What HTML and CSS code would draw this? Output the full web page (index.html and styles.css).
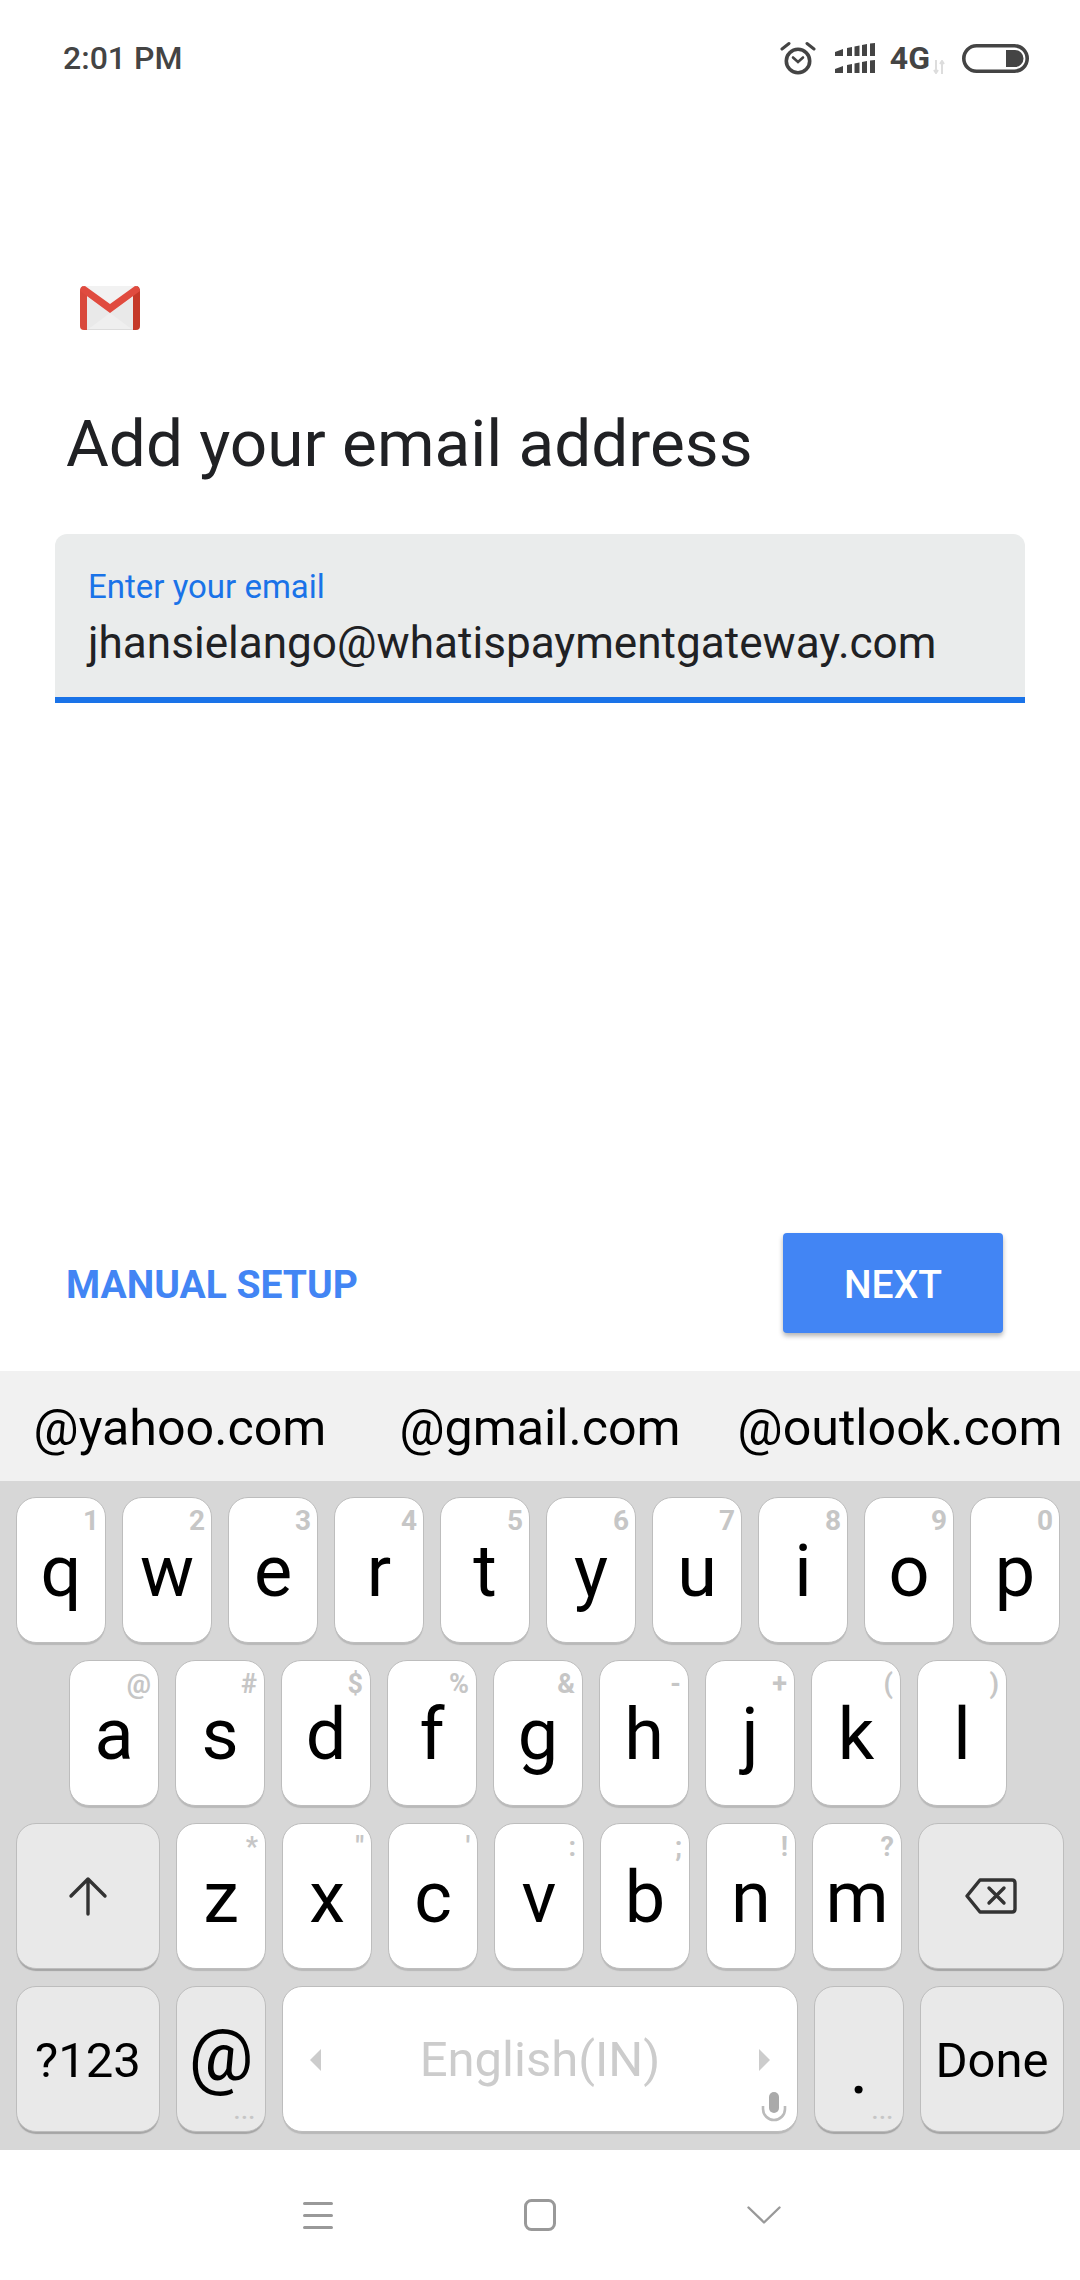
FILE: index.html
```html
<!DOCTYPE html>
<html lang="en">
<head>
<meta charset="utf-8">
<title>Add your email address</title>
<link rel="stylesheet" href="styles.css">
</head>
<body>
<div class="phone">
  <header class="status">
    <span class="time">2:01 PM</span>
    <div class="status-icons">
      <svg class="ic-alarm" width="36" height="34" viewBox="0 0 36 34" fill="none" stroke="#444" stroke-linecap="round"><circle cx="18" cy="20" r="11.7" stroke-width="3.6"/><path d="M13 16.5 18 21l5-4.5" stroke-width="2.6"/><path d="M2 8 9 2.5M27 2.5 34 8" stroke-width="3"/></svg>
      <svg class="ic-signal" width="40" height="30" viewBox="0 0 40 30" fill="#444"><path d="M0 9l8-3v7H0zM12 5l5-1v9h-5zM19.500 3.500l5-1V13h-5zM27 2l5-1v12h-5zM35 .5 40 0v13h-5z"/><path d="M0 26l8-3v7H0zM12 22l5-1v9h-5zM19.500 20.500l5-1V30h-5zM27 19l5-1v12h-5zM35 17.500 40 17v13h-5z"/></svg>
      <span class="net">4G</span>
      <svg class="ic-arrows" width="12" height="14" viewBox="0 0 12 14" fill="none" stroke="#ddd" stroke-width="2"><path d="M3 0v13M1 10l2 3 2-3M9 14V1M7 4l2-3 2 3"/></svg>
      <svg class="ic-battery" width="67" height="29" viewBox="0 0 67 29"><rect x="1.800" y="1.800" width="63.400" height="25.400" rx="12.700" fill="none" stroke="#444" stroke-width="3.600"/><path d="M44 6h9a8.500 8.500 0 0 1 0 17h-9z" fill="#444"/></svg>
    </div>
  </header>

  <main class="main">
    <svg class="gmail" width="60" height="44" viewBox="0 0 60 44">
      <rect width="60" height="44" rx="4" fill="#f2f2f2"/>
      <path d="M7 11l23 16 23-16v33H7z" fill="#e9e9e9"/>
      <path d="M7 44l23-17 23 17z" fill="#efefef"/>
      <path d="M7 43h46v1H7z" fill="#dcdcdc"/>
      <path d="M0 5q0-4 3-5l4 4v40H4q-4 0-4-4z" fill="#d9493c"/>
      <path d="M60 5q0-4-3-5l-4 4v40h3q4 0 4-4z" fill="#c53929"/>
      <path d="M0 5Q1 0 5 0l25 18L55 0q4 0 5 5l-30 22z" fill="#e04b3f"/>
    </svg>
    <h1 class="title">Add your email address</h1>
    <div class="field">
      <label class="field-label">Enter your email</label>
      <div class="field-value">jhansielango@whatispaymentgateway.com</div>
    </div>
    <div class="actions">
      <span class="manual">MANUAL SETUP</span>
      <span class="next">NEXT</span>
    </div>
  </main>

  <div class="suggestions">
    <span>@yahoo.com</span>
    <span>@gmail.com</span>
    <span>@outlook.com</span>
  </div>

  <section class="keyboard">
    <div class="row">
      <div class="key">q<i class="hint">1</i></div>
      <div class="key">w<i class="hint">2</i></div>
      <div class="key">e<i class="hint">3</i></div>
      <div class="key">r<i class="hint">4</i></div>
      <div class="key">t<i class="hint">5</i></div>
      <div class="key">y<i class="hint">6</i></div>
      <div class="key">u<i class="hint">7</i></div>
      <div class="key">i<i class="hint">8</i></div>
      <div class="key">o<i class="hint">9</i></div>
      <div class="key">p<i class="hint">0</i></div>
    </div>
    <div class="row row-home">
      <div class="key">a<i class="hint sym">@</i></div>
      <div class="key">s<i class="hint sym">#</i></div>
      <div class="key">d<i class="hint sym">$</i></div>
      <div class="key">f<i class="hint sym">%</i></div>
      <div class="key">g<i class="hint sym">&amp;</i></div>
      <div class="key">h<i class="hint sym">-</i></div>
      <div class="key">j<i class="hint sym">+</i></div>
      <div class="key">k<i class="hint sym">(</i></div>
      <div class="key">l<i class="hint sym">)</i></div>
    </div>
    <div class="row">
      <div class="key mod wide center">
        <svg width="40" height="40" viewBox="0 0 40 40" fill="none" stroke="#333" stroke-width="3.400" stroke-linecap="round" stroke-linejoin="round"><path d="M20 38V3M3 20 20 3l17 17"/></svg>
      </div>
      <div class="key">z<i class="hint sym">*</i></div>
      <div class="key">x<i class="hint sym">"</i></div>
      <div class="key">c<i class="hint sym">'</i></div>
      <div class="key">v<i class="hint sym">:</i></div>
      <div class="key">b<i class="hint sym">;</i></div>
      <div class="key">n<i class="hint sym">!</i></div>
      <div class="key">m<i class="hint sym">?</i></div>
      <div class="key mod back center">
        <svg width="52" height="36" viewBox="0 0 52 36" fill="none" stroke="#333" stroke-width="3.400" stroke-linejoin="round"><path d="M15 2h32q3 0 3 3v26q0 3-3 3H15L2 18z"/><path d="M24 10l15 15M39 10 24 25" stroke-linecap="round"/></svg>
      </div>
    </div>
    <div class="row">
      <div class="key mod wide label">?123</div>
      <div class="key mod at">@<i class="more">...</i></div>
      <div class="key space">
        <svg width="11" height="22" viewBox="0 0 11 22" fill="#ccc"><path d="M11 0v22L0 11z"/></svg>
        <span class="lang">English(IN)</span>
        <svg width="11" height="22" viewBox="0 0 11 22" fill="#ccc"><path d="M0 0v22l11-11z"/></svg>
        <svg class="mic" width="26" height="30" viewBox="0 0 26 30" fill="none"><rect x="8" y="0" width="10" height="21" rx="5" fill="#aaa"/><path d="M2 14v3a11 11 0 0 0 22 0v-3" stroke="#bbb" stroke-width="2.600"/></svg>
      </div>
      <div class="key mod dot">.<i class="more">...</i></div>
      <div class="key mod wide label">Done</div>
    </div>
  </section>

  <nav class="navbar">
    <svg width="30" height="27" viewBox="0 0 30 27" fill="none" stroke="#999" stroke-width="3" stroke-linecap="round"><path d="M1.500 1.500h27M1.500 13.500h27M1.500 25.500h27"/></svg>
    <svg width="32" height="32" viewBox="0 0 32 32" fill="none" stroke="#999" stroke-width="3"><rect x="1.500" y="1.500" width="29" height="29" rx="6"/></svg>
    <svg width="34" height="18" viewBox="0 0 34 18" fill="none" stroke="#999" stroke-width="2.400" stroke-linecap="round" stroke-linejoin="round"><path d="M1.500 1.500 17 16.500 32.500 1.500"/></svg>
  </nav>
</div>
</body>
</html>
```
FILE: styles.css
```css
* { box-sizing: border-box; }
html, body { margin: 0; padding: 0; }
body { background: #fff; font-family: Roboto, "Liberation Sans", sans-serif; }
.phone { width: 1080px; height: 2280px; display: flex; flex-direction: column; overflow: hidden; background: #fff; }

.status { height: 116px; flex: none; display: flex; justify-content: space-between; align-items: center; padding: 0 51px 0 63px; color: #444; }
.time { font-size: 32px; font-weight: 500; line-height: 36px; }
.status-icons { display: flex; align-items: center; }
.ic-signal { margin-left: 19px; }
.net { margin-left: 15px; font-size: 32px; font-weight: 700; line-height: 30px; }
.ic-arrows { margin-left: 3px; margin-bottom: 1px; align-self: flex-end; }
.ic-battery { margin-left: 17px; }

.main { flex: 1; min-height: 0; display: flex; flex-direction: column; align-items: flex-start; padding-top: 170px; }
.gmail { margin-left: 80px; display: block; flex: none; }
.title { margin: 74px 0 0 66px; font-size: 65.700px; font-weight: 400; line-height: 80px; color: #202124; }
.field { margin: 50px 0 0 55px; width: 970px; height: 169px; padding: 33px 33px 0; background: #eaecec; border-radius: 12px 12px 0 0; border-bottom: 6px solid #1a73e8; }
.field-label { display: block; font-size: 33px; line-height: 40px; color: #1a73e8; }
.field-value { margin-top: 10px; font-size: 44.100px; line-height: 52px; color: #202124; }
.actions { margin-top: auto; width: 100%; display: flex; justify-content: space-between; align-items: center; padding: 0 77px 38px 66px; }
.manual { padding-top: 3px; font-size: 39px; font-weight: 700; color: #4285f4; }
.next { width: 220px; height: 100px; padding-top: 3px; display: flex; align-items: center; justify-content: center; background: #4285f4; color: #fff; font-size: 39px; font-weight: 500; border-radius: 4px; box-shadow: 0 3px 5px rgba(0, 0, 0, .3); }

.suggestions { flex: none; height: 110px; padding-top: 2px; background: #f1f1f1; display: grid; grid-template-columns: repeat(3, 1fr); align-items: center; text-align: center; font-size: 50.200px; color: #000; }

.keyboard { flex: none; height: 669px; padding: 16px 16px 0; display: flex; flex-direction: column; gap: 17px; background: #d7d7d7; }
.row { display: flex; gap: 16px; }
.row-home { padding-left: 53px; }
.key { position: relative; width: 90px; height: 146px; flex: none; display: flex; justify-content: center; padding-top: 38px; background: #fff; border: 1px solid #bdbdbd; border-radius: 20px; box-shadow: 0 3px 1px -1px #b9b9b9; font-size: 72px; line-height: 72px; color: #000; }
.mod { background: #e9e9e9; box-shadow: 0 3px 1px -1px #a5a5a5; }
.wide { width: 144px; }
.back { width: 146px; }
.center { align-items: center; padding-top: 0; }
.label { font-size: 49px; line-height: 48px; padding-top: 50px; }
.at { font-size: 72px; padding-top: 33px; }
.dot { padding-top: 46px; }
.space { width: 516px; padding: 2px 27px 0; justify-content: space-between; align-items: center; }
.lang { font-size: 49px; line-height: 56px; color: #ccc; }
.mic { position: absolute; right: 10px; bottom: 9px; }
.hint { position: absolute; top: 6px; right: 6px; font-style: normal; font-size: 28px; line-height: 34px; font-weight: 700; color: #c6c6c6; }
.hint.sym { font-size: 27px; right: 7px; }
.more { position: absolute; right: 9px; bottom: 8px; font-style: normal; font-size: 22px; line-height: 22px; font-weight: 700; letter-spacing: 1px; color: #c6c6c6; }

.navbar { flex: none; height: 130px; padding-left: 3px; display: flex; justify-content: center; align-items: center; gap: 191px; background: #fff; }
```
